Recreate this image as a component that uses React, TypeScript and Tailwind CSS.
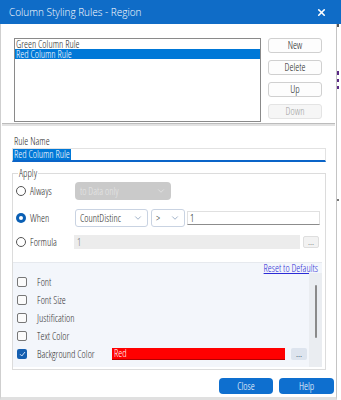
import { ChevronDown, X } from "lucide-react";

const font = "font-['Open_Sans','Liberation_Sans',sans-serif]";

function Radio({ checked }: { checked?: boolean }) {
  return checked ? (
    <span className="w-[10px] h-[10px] rounded-full bg-[#0a5fb4] flex items-center justify-center shrink-0">
      <span className="w-[4px] h-[4px] rounded-full bg-white" />
    </span>
  ) : (
    <span className="w-[10px] h-[10px] rounded-full border border-[#555] bg-white shrink-0" />
  );
}

function Check({ checked }: { checked?: boolean }) {
  return checked ? (
    <span className="w-[10px] h-[10px] rounded-[2px] bg-[#155fb0] flex items-center justify-center shrink-0">
      <svg width="7" height="6" viewBox="0 0 7 6">
        <path d="M1 3.2 L2.8 5 L6 1" fill="none" stroke="#cfe0f5" strokeWidth="1" />
      </svg>
    </span>
  ) : (
    <span className="w-[10px] h-[10px] rounded-[2px] border border-[#777] bg-[#fbfbfb] shrink-0" />
  );
}

function SideButton({ label, disabled }: { label: string; disabled?: boolean }) {
  return (
    <div
      className={`h-[15px] w-[54px] rounded-[3px] border flex items-center justify-center ${
        disabled ? "border-[#e4e4e4] bg-[#f6f6f6] text-[#a0a0a0]" : "border-[#d0d0d0] bg-[#fdfdfd] text-[#222]"
      }`}
    >
      {label}
    </div>
  );
}

export default function App() {
  const styleRows = ["Font", "Font Size", "Justification", "Text Color"];

  return (
    <div className={`w-[341px] h-[400px] bg-white flex flex-col overflow-hidden text-[10px] leading-[11px] font-[350] font-stretch-[80%] text-[#2a2a2a] ${font}`}>
      {/* Title bar */}
      <div className="h-[24px] bg-[#0f6cc7] flex items-center justify-between pl-[9px] pr-[14px] text-white shrink-0">
        <span className="font-stretch-[92%]">Column Styling Rules - Region</span>
        <X size={11} strokeWidth={3.5} />
      </div>

      <div className="flex flex-1">
        {/* Dialog body */}
        <div className="w-[337px] flex flex-col border-l border-r border-b-[3px] border-l-[#cfcfcf] border-r-[#c4c4c4] border-b-[#e0e0e0]">
          {/* Rule list */}
          <div className="flex gap-[7px] pl-[13px] pt-[14px]">
            <div className="w-[247px] h-[84px] border border-[#8a8a8a] bg-white leading-[10px]">
              <div className="h-[10px] pl-[1px]">Green Column Rule</div>
              <div className="h-[10px] pl-[1px] bg-[#0078d7] text-white">Red Column Rule</div>
            </div>
            <div className="flex flex-col gap-[7px]">
              <SideButton label="New" />
              <SideButton label="Delete" />
              <SideButton label="Up" />
              <SideButton label="Down" disabled />
            </div>
          </div>

          <div className="mt-[1px] mx-[1px] h-[3px] border-t border-[#bcbcbc] bg-[#e2e2e2]" />

          {/* Rule name */}
          <div className="pl-[13px] mt-[9px] mb-[1px] leading-[12px]">Rule Name</div>
          <div className="ml-[11px] w-[314px] h-[14px] border border-[#e2e2e2] border-b-2 border-b-[#0a64c8] bg-white flex items-center">
            <span className="bg-[#0078d7] text-white leading-[11px] px-[1px]">Red Column Rule</span>
          </div>

          {/* Apply group */}
          <fieldset className="ml-[11px] w-[314px] mt-[5px] border border-[#dcdcdc] pb-[2px]">
            <legend className="ml-[5px] px-[1px] leading-[12px]">Apply</legend>
            <div className="flex flex-col pt-[3px]">
              <div className="flex items-center h-[18px]">
                <div className="w-[62px] flex items-center gap-[4px] pl-[3px]">
                  <Radio />
                  <span>Always</span>
                </div>
                <div className="w-[96px] h-[18px] rounded-[4px] bg-[#cacaca] flex items-center justify-between px-[5px] text-[#e6e6e6]">
                  <span>to Data only</span>
                  <ChevronDown size={10} className="text-[#e4e4e4]" />
                </div>
              </div>

              <div className="flex items-center h-[18px] mt-[9px]">
                <div className="w-[62px] flex items-center gap-[4px] pl-[3px]">
                  <Radio checked />
                  <span>When</span>
                </div>
                <div className="w-[73px] h-[18px] rounded-[3px] border border-[#c9d3e2] bg-white flex items-center justify-between pl-[4px] pr-[4px]">
                  <span className="whitespace-nowrap">CountDistinc</span>
                  <ChevronDown size={10} className="text-[#8fa3bf] shrink-0" />
                </div>
                <div className="ml-[3px] w-[34px] h-[18px] rounded-[3px] border border-[#c9d3e2] bg-white flex items-center justify-between pl-[4px] pr-[4px]">
                  <span>&gt;</span>
                  <ChevronDown size={10} className="text-[#8fa3bf]" />
                </div>
                <div className="ml-[2px] w-[133px] h-[14px] border border-[#e0e0e0] border-b-[#8c8c8c] bg-white flex items-center pl-[2px]">
                  1
                </div>
              </div>

              <div className="flex items-center h-[14px] mt-[8px]">
                <div className="w-[61px] flex items-center gap-[4px] pl-[3px]">
                  <Radio />
                  <span>Formula</span>
                </div>
                <div className="w-[226px] h-[14px] bg-[#ececec] flex items-center pl-[3px] text-[#7a7a7a]">1</div>
                <div className="ml-[3px] w-[16px] h-[12px] rounded-[2px] border border-[#dedede] bg-[#f2f2f2] flex items-center justify-center text-[#8a8a8a] text-[9px] leading-[8px] font-normal">
                  ...
                </div>
              </div>

              {/* Style panel */}
              <div className="mt-[13px] w-[309px] h-[105px] bg-[#f3f6fb] border-t border-[#e6e9ee] flex flex-col overflow-hidden">
                <div className="h-[10px] flex justify-end pr-[4px] leading-[10px]">
                  <span className="text-[#2b2bd6] underline">Reset to Defaults</span>
                </div>
                <div className="flex flex-1">
                  <div className="flex-1 flex flex-col pl-[4px]">
                    {styleRows.map((r) => (
                      <div key={r} className="h-[18px] flex items-center gap-[10px] text-[#333]">
                        <Check />
                        <span>{r}</span>
                      </div>
                    ))}
                    <div className="h-[18px] flex items-center text-[#333]">
                      <Check checked />
                      <span className="ml-[10px] w-[75px] whitespace-nowrap">Background Color</span>
                      <div className="w-[173px] h-[12px] bg-[#ff0000] text-white flex items-center pl-[2px] border-b border-[#b30000]">
                        Red
                      </div>
                      <div className="ml-[6px] w-[16px] h-[12px] rounded-[2px] bg-[#dde4ee] flex items-center justify-center text-[#4a5d7a] text-[9px] leading-[8px] font-normal">
                        ...
                      </div>
                    </div>
                    <div className="h-[18px] flex items-center">
                      <Check />
                    </div>
                  </div>
                  <div className="w-[13px] bg-[#eaedf1] flex justify-center pt-[12px]">
                    <div className="w-[2px] h-[53px] bg-[#8a8a8a] rounded-full" />
                  </div>
                </div>
              </div>
            </div>
          </fieldset>

          {/* Footer buttons */}
          <div className="flex justify-end gap-[6px] pr-[2px] mt-[8px]">
            <div className="w-[54px] h-[16px] rounded-[4px] bg-[#0e6fcf] text-white flex items-center justify-center">Close</div>
            <div className="w-[55px] h-[16px] rounded-[4px] bg-[#0e6fcf] text-white flex items-center justify-center">Help</div>
          </div>
        </div>

        {/* Background app peeking out */}
        <div className="flex-1 flex flex-col items-start">
          <div className="w-[2px] h-[3px] bg-[#555] mt-[0px]" />
          <div className="w-[2px] h-[4px] bg-[#5b2a86] mt-[44px]" />
          <div className="w-[2px] h-[3px] bg-[#5b2a86] mt-[4px]" />
          <div className="w-[2px] h-[3px] bg-[#5b2a86] mt-[4px]" />
          <div className="w-[2px] h-[2px] bg-[#777] mt-[110px]" />
        </div>
      </div>
    </div>
  );
}
